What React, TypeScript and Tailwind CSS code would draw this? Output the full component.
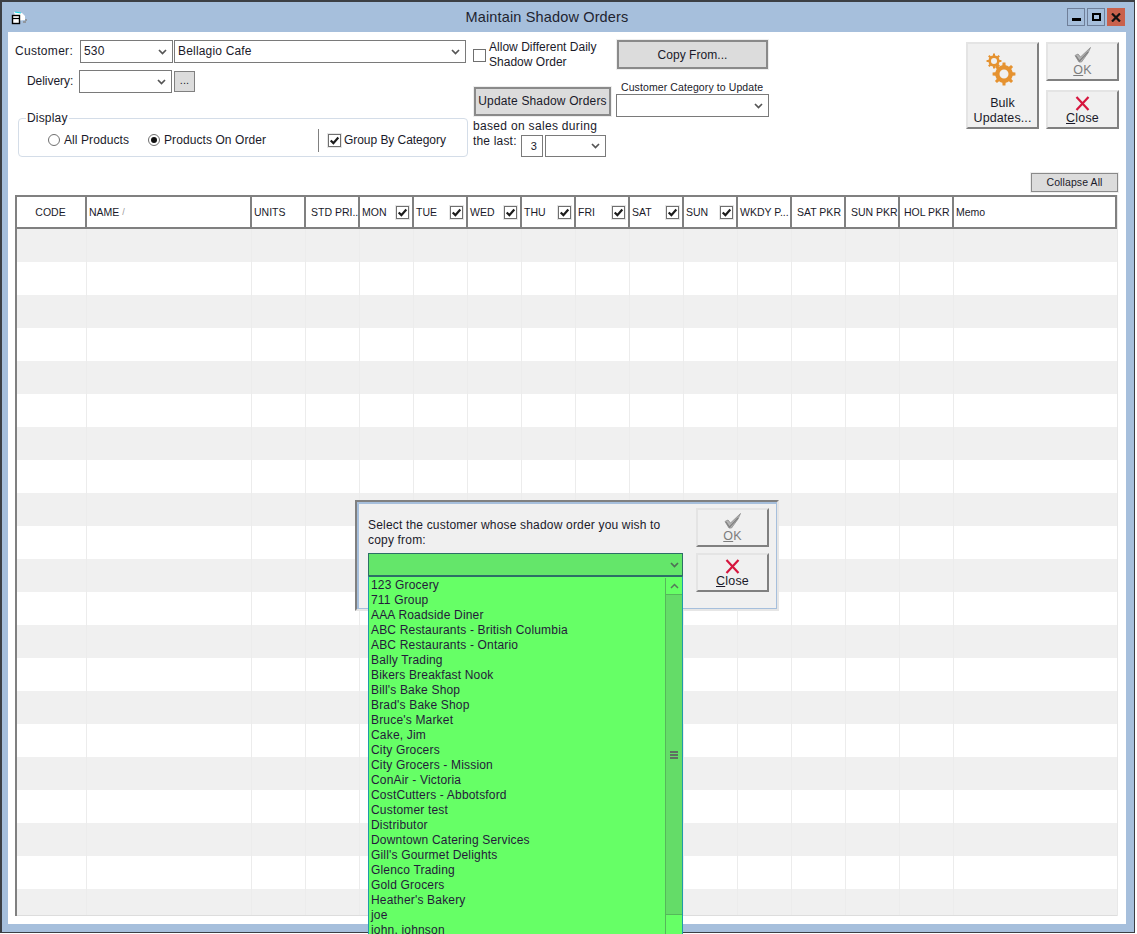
import React from "react";

const customers = ["123 Grocery","711 Group","AAA Roadside Diner","ABC Restaurants - British Columbia","ABC Restaurants - Ontario","Bally Trading","Bikers Breakfast Nook","Bill's Bake Shop","Brad's Bake Shop","Bruce's Market","Cake, Jim","City Grocers","City Grocers - Mission","ConAir - Victoria","CostCutters - Abbotsford","Customer test","Distributor","Downtown Catering Services","Gill's Gourmet Delights","Glenco Trading","Gold Grocers","Heather's Bakery","joe","john, johnson"];

const cols: { label: string; w: string; check?: boolean; cls?: string }[] = [
  { label: "CODE", w: "w-[70px]", cls: "justify-center pr-[1px]" },
  { label: "NAME", w: "w-[165px]", cls: "pl-[2px]" },
  { label: "UNITS", w: "w-[54px]", cls: "pl-[2px]" },
  { label: "STD PRI...", w: "w-[54px]", cls: "pl-[5px]" },
  { label: "MON", w: "w-[54px]", check: true },
  { label: "TUE", w: "w-[54px]", check: true },
  { label: "WED", w: "w-[54px]", check: true },
  { label: "THU", w: "w-[54px]", check: true },
  { label: "FRI", w: "w-[54px]", check: true },
  { label: "SAT", w: "w-[54px]", check: true },
  { label: "SUN", w: "w-[54px]", check: true },
  { label: "WKDY P...", w: "w-[54px]", cls: "pl-[2px]" },
  { label: "SAT PKR", w: "w-[54px]", cls: "pl-[5px]" },
  { label: "SUN PKR", w: "w-[54px]", cls: "pl-[5px]" },
  { label: "HOL PKR", w: "w-[54px]", cls: "pl-[4px]" },
  { label: "Memo", w: "flex-1", cls: "pl-[2px]" },
];

function Chevron({ color = "#555" }: { color?: string }) {
  return (
    <svg width="9" height="6" viewBox="0 0 9 6" className="shrink-0">
      <path d="M1 1 L4.5 4.5 L8 1" fill="none" stroke={color} strokeWidth="1.7" />
    </svg>
  );
}

function Combo({ text, w, h = "h-[23px]" }: { text?: string; w: string; h?: string }) {
  return (
    <div className={`${w} ${h} shrink-0 border border-[#7a7a7a] bg-white flex items-center justify-between pl-[3px] pr-[5px]`}>
      <span>{text}</span>
      <Chevron />
    </div>
  );
}

function Tick({ size = 13 }: { size?: number }) {
  return (
    <svg width={size} height={size} viewBox="0 0 13 13">
      <path d="M2 6.5 L5.2 9.6 L11 3" fill="none" stroke="#1c1c1c" strokeWidth="2.6" />
    </svg>
  );
}

function CheckBox({ checked, cls = "" }: { checked?: boolean; cls?: string }) {
  return (
    <span className={`w-[13px] h-[13px] shrink-0 border border-[#6f6f6f] bg-white flex items-center justify-center ${checked ? "outline outline-1 outline-[#e6e6e6]" : ""} ${cls}`}>
      {checked && <Tick size={11} />}
    </span>
  );
}

function Radio({ on }: { on?: boolean }) {
  return (
    <span className="w-[12px] h-[12px] shrink-0 rounded-full border border-[#6f6f6f] bg-white flex items-center justify-center">
      {on && <span className="w-[6px] h-[6px] rounded-full bg-[#111]" />}
    </span>
  );
}

function OkIcon() {
  return (
    <svg width="18" height="16" viewBox="0 0 18 16">
      <path d="M1 8.5 L4 7 L6.5 10 L16.5 0.5 L14 6 L7.5 15 L5 15 Z" fill="#b4b4b4" stroke="#8a8a8a" strokeWidth="0.8" />
      <path d="M2 9 L5.5 14 L14 5" fill="none" stroke="#808080" strokeWidth="1.2" />
    </svg>
  );
}

function XIcon() {
  return (
    <svg width="15" height="15" viewBox="0 0 15 15">
      <path d="M1.5 1 L13.5 14 M13.5 1 L1.5 14" fill="none" stroke="#d6163e" strokeWidth="2.2" />
    </svg>
  );
}

function gear(cx: number, cy: number, ro: number, ri: number, hole: number, n: number) {
  let d = "";
  const step = (Math.PI * 2) / n;
  for (let i = 0; i < n; i++) {
    const a = i * step;
    const pts = [
      [ri, a - step * 0.5],
      [ri, a - step * 0.24],
      [ro, a - step * 0.16],
      [ro, a + step * 0.16],
      [ri, a + step * 0.24],
    ];
    pts.forEach(([r, t], k) => {
      d += `${i === 0 && k === 0 ? "M" : "L"}${(cx + r * Math.cos(t)).toFixed(2)} ${(cy + r * Math.sin(t)).toFixed(2)} `;
    });
  }
  d += `Z M${cx + hole} ${cy} A${hole} ${hole} 0 1 0 ${cx - hole} ${cy} A${hole} ${hole} 0 1 0 ${cx + hole} ${cy} Z`;
  return d;
}

function Gears() {
  return (
    <svg width="30" height="34" viewBox="0 0 30 34">
      <path d={gear(8, 8, 7.5, 5.6, 3, 8)} fill="#e59230" fillRule="evenodd" />
      <path d={gear(18, 21, 11.5, 8.8, 4.5, 8)} fill="#e59230" fillRule="evenodd" />
    </svg>
  );
}

function ActionBtn({ kind, w = "w-[73px]", h }: { kind: "ok" | "close"; w?: string; h: string }) {
  return (
    <div className={`${w} ${h} shrink-0 bg-[#f0f0f0] border-2 border-[#e4e4e4] border-r-[#808080] border-b-[#808080] flex flex-col items-center justify-end pb-[1px] text-[12.5px] leading-[15px] tracking-[0.2px]`}>
      {kind === "ok" ? <OkIcon /> : <XIcon />}
      {kind === "ok" ? (
        <span className="text-[#7d7d7d]"><span className="underline">O</span>K</span>
      ) : (
        <span><span className="underline">C</span>lose</span>
      )}
    </div>
  );
}

function FlatBtn({ children, cls }: { children: React.ReactNode; cls: string }) {
  return (
    <div className={`bg-[#dcdcdc] border-2 border-[#8a8a8a] outline outline-1 outline-[#eeeeee] flex items-center justify-center ${cls}`}>
      {children}
    </div>
  );
}

function WinBtn({ children, cls }: { children: React.ReactNode; cls: string }) {
  return <div className={`w-[18px] h-[18px] border border-[#6f7f99] flex items-center justify-center ${cls}`}>{children}</div>;
}

export default function App() {
  return (
    <div className="w-[1137px] h-[934px] relative overflow-hidden bg-white font-['Liberation_Sans',sans-serif] text-[12px] leading-[15px] text-[#1a1a2a] tracking-[0.18px]">
      <div className="w-[1135px] h-[933px] border border-[#3c3f44] border-l-2 border-t-2 bg-[#a6bfdc] flex flex-col">
        {/* title bar */}
        <div className="h-[30px] shrink-0 flex items-center relative pl-[9px] pr-[9px]">
          <svg width="16" height="14" viewBox="0 0 16 14" className="mt-[2px]">
            <path d="M3 1 L11 2 L14 5 L14 9 L5 10 Z" fill="#fff" />
            <path d="M4 1 L10 2" stroke="#18e0e8" strokeWidth="1.2" />
            <path d="M14 9 h2 M12 11 h3" stroke="#8a8a8a" strokeWidth="1.5" />
            <rect x="1.5" y="4.5" width="7" height="8" fill="#fff" stroke="#000" strokeWidth="1.4" />
            <path d="M1.5 7.5 h7" stroke="#000" strokeWidth="1.2" />
          </svg>
          <div className="flex-1 text-center text-[14.5px] tracking-[0.15px] pt-[1px] text-[#1f2430]">Maintain Shadow Orders</div>
          <div className="flex gap-[2px]">
            <WinBtn cls="bg-[#a6bfdc]"><span className="w-[9px] h-[3px] bg-black mt-[5px]" /></WinBtn>
            <WinBtn cls="bg-[#a6bfdc]"><span className="w-[9px] h-[8px] border-2 border-black" /></WinBtn>
            <WinBtn cls="bg-[#c9614c] border-[#c9614c]">
              <svg width="10" height="9" viewBox="0 0 10 9"><path d="M1 .5 L9 8.5 M9 .5 L1 8.5" stroke="#111" strokeWidth="2.2" /></svg>
            </WinBtn>
          </div>
        </div>

        {/* client area */}
        <div className="flex-1 min-h-0 bg-white ml-[6px] mr-[8px] mb-[8px] flex flex-col pl-[7px] pr-[8px]">
          {/* form */}
          <div className="h-[141px] shrink-0 flex">
            <div className="w-[453px] shrink-0 pt-[8px]">
              <div className="flex items-center h-[23px]">
                <span className="w-[65px] shrink-0 tracking-[0.3px]">Customer:</span>
                <Combo text="530" w="w-[93px]" />
                <span className="w-[1px]" />
                <Combo text="Bellagio Cafe" w="w-[292px]" />
              </div>
              <div className="flex items-center h-[23px] mt-[7px]">
                <span className="w-[64px] shrink-0 pl-[12px] tracking-[-0.05px]">Delivery:</span>
                <Combo w="w-[93px]" />
                <span className="w-[2px]" />
                <div className="w-[21px] h-[21px] bg-[#dcdcdc] border border-[#808080] flex items-center justify-center text-[11px] pb-[2px]">...</div>
              </div>
              <fieldset className="ml-[3px] mt-[18px] w-[450px] h-[46px] border border-[#d4dde8] rounded-[4px] flex">
                <legend className="ml-[7px] px-[1px] leading-[14px]">Display</legend>
                <div className="flex items-center h-[30px] pl-[29px] tracking-[0.08px]">
                  <Radio on={false} />
                  <span className="ml-[4px] w-[84px]">All Products</span>
                  <Radio on />
                  <span className="ml-[4px] w-[154px]">Products On Order</span>
                  <span className="w-[1px] h-[23px] bg-[#808080]" />
                  <CheckBox checked cls="ml-[9px]" />
                  <span className="ml-[3px] tracking-[-0.05px]">Group By Category</span>
                </div>
              </fieldset>
            </div>

            <div className="w-[143px] shrink-0 ml-[5px] pt-[8px]">
              <div className="flex items-center">
                <CheckBox />
                <span className="ml-[3px] whitespace-nowrap tracking-[0.02px]">Allow Different Daily<br />Shadow Order</span>
              </div>
              <FlatBtn cls="w-[137px] h-[29px] ml-[1px] mt-[17px] whitespace-nowrap tracking-[0.15px]">Update Shadow Orders</FlatBtn>
              <div className="mt-[3px] whitespace-nowrap tracking-[0.32px]">based on sales during</div>
              <div className="flex items-start">
                <span className="w-[48px]">the last:</span>
                <div className="w-[22px] h-[22px] mt-[1px] border border-[#7a7a7a] flex items-center justify-center text-[11px] pl-[4px]">3</div>
                <span className="w-[2px]" />
                <Combo w="w-[61px]" h="h-[22px] mt-[1px]" />
              </div>
            </div>

            <div className="w-[153px] shrink-0 pt-[8px]">
              <FlatBtn cls="w-[151px] h-[29px] ml-[1px] pt-[1px] tracking-[0.05px]">Copy From...</FlatBtn>
              <div className="mt-[11px] ml-[5px] text-[10.5px] leading-[14px] tracking-[0.1px] whitespace-nowrap">Customer Category to Update</div>
              <Combo w="w-[153px]" />
            </div>

            <div className="flex-1" />
            <div className="flex gap-[7px] pt-[10px] mr-[-1px]">
              <div className="w-[73px] h-[87px] bg-[#f0f0f0] border-2 border-[#e4e4e4] border-r-[#808080] border-b-[#808080] flex flex-col items-center text-[12.5px] leading-[15px] tracking-[0.1px]">
                <div className="mt-[9px] mr-[4px]"><Gears /></div>
                <div className="text-center mt-[9px]">Bulk<br />Updates...</div>
              </div>
              <div className="flex flex-col gap-[9px]">
                <ActionBtn kind="ok" h="h-[39px]" />
                <ActionBtn kind="close" h="h-[39px]" />
              </div>
            </div>
          </div>

          {/* collapse */}
          <div className="h-[22px] shrink-0 flex justify-end">
            <FlatBtn cls="w-[87px] h-[19px] !border-[1px] text-[10.5px] tracking-[0.1px]">Collapse All</FlatBtn>
          </div>

          {/* table */}
          <div className="h-[721px] shrink-0 border-l-2 border-[#808080] border-r border-r-[#e8e8e8] flex flex-col overflow-hidden">
            <div className="h-[34px] shrink-0 flex border-2 border-l-0 border-[#808080] bg-white text-[10.5px] tracking-[0px]">
              {cols.map((c) => (
                <div key={c.label} className={`${c.w} shrink-0 h-full flex items-center border-r-2 last:border-r-0 border-[#808080] whitespace-nowrap ${c.check ? "justify-between pl-[2px] pr-[3px]" : "overflow-hidden"} ${c.cls ?? ""}`}>
                  <span>{c.label}</span>
                  {c.label === "NAME" && <span className="ml-[3px] text-[#999] text-[9px]">/</span>}
                  {c.check && <CheckBox checked />}
                </div>
              ))}
            </div>
            <div className="h-[687px] overflow-hidden border-b border-[#dddddd] shrink-0">
              {Array.from({ length: 21 }).map((_, i) => (
                <div key={i} className={`h-[33px] flex ${i % 2 === 0 ? "bg-[#f0f0f0]" : "bg-white"}`}>
                  {cols.map((c) => (
                    <div key={c.label} className={`${c.w} shrink-0 h-full border-r border-[#ececec] last:border-r-0`} />
                  ))}
                </div>
              ))}
            </div>
          </div>
        </div>
      </div>

      {/* copy-from dialog */}
      <div className="absolute left-[355px] top-[500px] w-[424px] h-[111px] border-2 border-[#808080] border-r-[#e6e6e6] border-b-[#e6e6e6] bg-[#a6bfdc] p-[2px] pr-[1px] pb-[1px]">
        <div className="w-full h-full bg-[#f0f0f0] flex pl-[9px] pt-[4px]">
          <div className="w-[315px] shrink-0 pt-[10px]">
            <div>Select the customer whose shadow order you wish to<br />copy from:</div>
            <div className="mt-[5px] h-[23px] bg-[#64e66a] border border-[#2c6f66] flex items-center justify-end pr-[3px]">
              <Chevron color="#4f6f55" />
            </div>
          </div>
          <div className="ml-[13px] flex flex-col gap-[6px]">
            <ActionBtn kind="ok" h="h-[39px]" />
            <ActionBtn kind="close" h="h-[39px]" />
          </div>
        </div>
      </div>

      {/* dropdown list */}
      <div className="absolute left-[368px] top-[576px] w-[315px] h-[358px] bg-[#66ff66] border-x border-x-[#1f9aa8] border-t border-t-[#2c6f66] pt-[1px] flex overflow-hidden text-[#241a3a]">
        <div className="flex-1 pl-[2px]">
          {customers.map((c) => (
            <div key={c} className="h-[15px] leading-[15px] whitespace-nowrap">{c}</div>
          ))}
        </div>
        <div className="w-[17px] shrink-0 border-l border-[#55b85a] flex flex-col">
          <div className="h-[17px] shrink-0 flex items-center justify-center border-b border-[#55b85a]">
            <svg width="9" height="6" viewBox="0 0 9 6"><path d="M1 5 L4.5 1.5 L8 5" fill="none" stroke="#557a5a" strokeWidth="1.5" /></svg>
          </div>
          <div className="h-[320px] shrink-0 bg-[#64dc68] border-b border-[#55b85a] flex flex-col items-center justify-center gap-[1px]">
            <span className="w-[8px] h-[2px] bg-[#5f6f62]" />
            <span className="w-[8px] h-[2px] bg-[#5f6f62]" />
            <span className="w-[8px] h-[2px] bg-[#5f6f62]" />
          </div>
        </div>
      </div>
    </div>
  );
}
